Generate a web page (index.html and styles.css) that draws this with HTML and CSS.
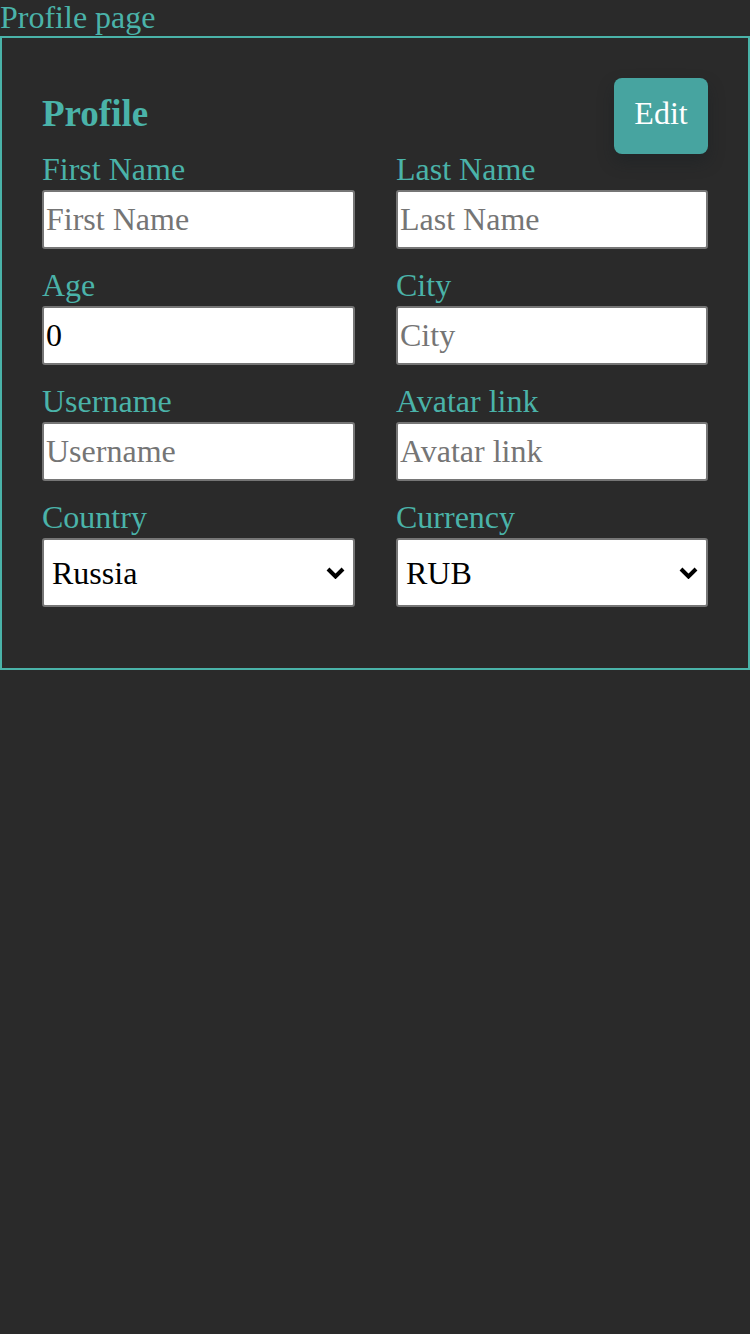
FILE: index.html
```html
<!DOCTYPE html>
<html lang="en">
<head>
<meta charset="utf-8">
<title>Profile page</title>
<link rel="stylesheet" href="styles.css">
</head>
<body>
<div class="page-title">Profile page</div>
<div class="card">
  <div class="card-header">
    <h2 class="card-title">Profile</h2>
    <button class="edit-btn" type="button">Edit</button>
  </div>
  <div class="form-grid">
    <label class="field">
      <span class="field-label">First Name</span>
      <input class="field-input" type="text" placeholder="First Name">
    </label>
    <label class="field">
      <span class="field-label">Last Name</span>
      <input class="field-input" type="text" placeholder="Last Name">
    </label>
    <label class="field">
      <span class="field-label">Age</span>
      <input class="field-input" type="text" value="0" placeholder="Age">
    </label>
    <label class="field">
      <span class="field-label">City</span>
      <input class="field-input" type="text" placeholder="City">
    </label>
    <label class="field">
      <span class="field-label">Username</span>
      <input class="field-input" type="text" placeholder="Username">
    </label>
    <label class="field">
      <span class="field-label">Avatar link</span>
      <input class="field-input" type="text" placeholder="Avatar link">
    </label>
    <label class="field">
      <span class="field-label">Country</span>
      <select class="field-select">
        <option>Russia</option>
        <option>Belarus</option>
        <option>Ukraine</option>
      </select>
    </label>
    <label class="field">
      <span class="field-label">Currency</span>
      <select class="field-select">
        <option>RUB</option>
        <option>EUR</option>
        <option>USD</option>
      </select>
    </label>
  </div>
</div>
</body>
</html>
```

FILE: styles.css
```css
html, body {
  margin: 0;
  padding: 0;
  background: #2a2a2a;
}

body {
  font-family: "Liberation Serif", "Times New Roman", serif;
  font-size: 32px;
  color: #4ab3a9;
}

.page-title {
  line-height: 35px;
  height: 36px;
}

.card {
  border: 2px solid #4ab3a9;
  padding: 40px 40px 61px;
}

.card-header {
  display: flex;
  justify-content: space-between;
  align-items: center;
  height: 76px;
}

.card-title {
  margin: 0 0 4px;
  font-size: 37px;
  font-weight: bold;
  line-height: 40px;
}

.edit-btn {
  font-family: "Liberation Serif", "Times New Roman", serif;
  font-size: 32px;
  line-height: 36px;
  color: #ffffff;
  background: #47a4a0;
  border: none;
  border-radius: 8px;
  padding: 17px 20px 23px;
  width: 94px;
  height: 76px;
  box-shadow: 0 8px 16px rgba(20, 28, 34, 0.35);
}

.form-grid {
  display: grid;
  grid-template-columns: 313px 312px;
  column-gap: 41px;
  row-gap: 19px;
  margin-top: -2px;
}

.field {
  display: flex;
  flex-direction: column;
  gap: 2px;
}

.field-label {
  line-height: 34px;
  height: 36px;
}

.field-input {
  box-sizing: border-box;
  height: 59px;
  width: 100%;
  margin: 0;
  font-family: "Liberation Serif", "Times New Roman", serif;
  font-size: 32px;
  color: #000000;
  background: #ffffff;
  border: 2px solid #767676;
  border-radius: 3px;
  padding: 1px 2px;
}

.field-input::placeholder {
  color: #757575;
}

.field-select {
  box-sizing: border-box;
  appearance: none;
  -webkit-appearance: none;
  height: 69px;
  width: 100%;
  margin: 0;
  font-family: "Liberation Serif", "Times New Roman", serif;
  font-size: 32px;
  color: #000000;
  background-color: #ffffff;
  background-image: url("data:image/svg+xml;utf8,<svg xmlns='http://www.w3.org/2000/svg' width='19' height='12' viewBox='0 0 19 12'><polyline points='2,2 9.5,9.5 17,2' fill='none' stroke='black' stroke-width='4'/></svg>");
  background-repeat: no-repeat;
  background-position: right 8px center;
  background-size: 19px 12px;
  border: 2px solid #767676;
  border-radius: 3px;
  padding: 0 36px 0 8px;
}
```
